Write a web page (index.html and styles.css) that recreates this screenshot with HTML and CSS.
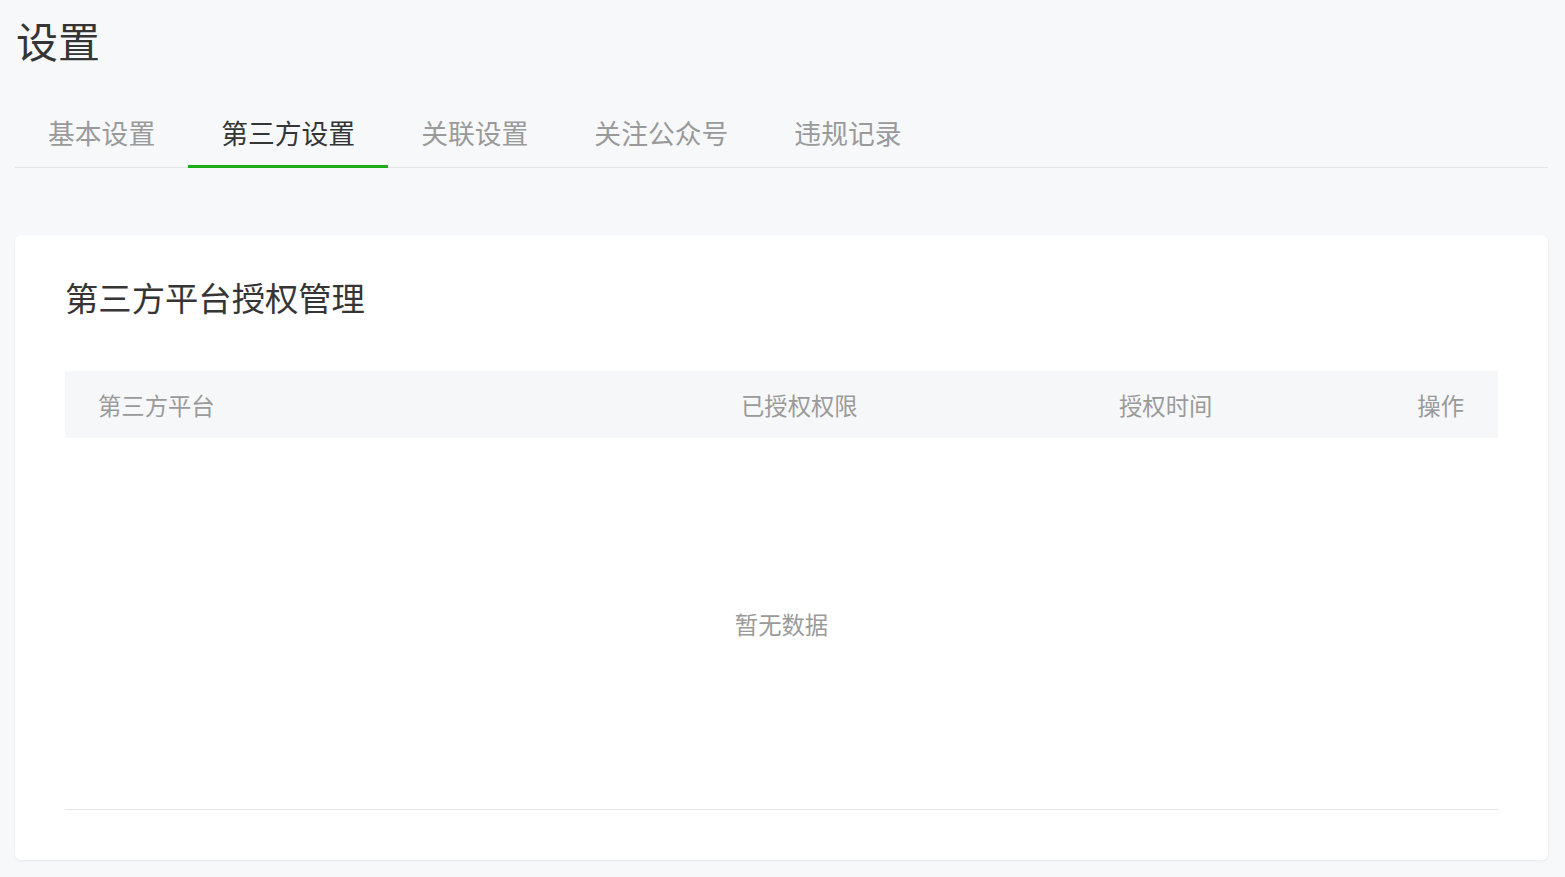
FILE: index.html
```html
<!DOCTYPE html>
<html lang="zh-CN">
<head>
    <meta charset="UTF-8">
    <meta name="viewport" content="width=device-width, initial-scale=1.0">
    <title>设置</title>
    <link rel="stylesheet" href="styles.css">
</head>
<body>
    <div class="page">
        <h1 class="page-title">设置</h1>

        <div class="tabs">
            <a class="tab">基本设置</a>
            <a class="tab active">第三方设置</a>
            <a class="tab">关联设置</a>
            <a class="tab">关注公众号</a>
            <a class="tab">违规记录</a>
        </div>

        <div class="card">
            <h2 class="card-title">第三方平台授权管理</h2>

            <div class="table">
                <div class="table-head">
                    <div class="cell">第三方平台</div>
                    <div class="cell">已授权权限</div>
                    <div class="cell">授权时间</div>
                    <div class="cell cell-right">操作</div>
                </div>
                <div class="table-empty">暂无数据</div>
            </div>
        </div>
    </div>
</body>
</html>
```

FILE: styles.css
```css
body { margin: 0; background: #f7f8fa; font-family: "Microsoft YaHei", "Noto Sans CJK SC", "Noto Sans", sans-serif; color: #353535; }
.page { padding: 11px 17px 17px 15px; }
.page-title { margin: 0; font-size: 42px; line-height: 58px; font-weight: normal; color: #353535; padding-left: 1px; }

.tabs { display: flex; margin-top: 44px; border-bottom: 1px solid #e5e5e5; }
.tab { padding: 0 33px 12px; font-size: 26.8px; line-height: 40px; color: #9a9a9a; border-bottom: 3px solid transparent; margin-bottom: -1px; cursor: pointer; }
.tab.active { color: #353535; border-bottom-color: #1aad19; }

.card { margin-top: 67px; background: #fff; border-radius: 6px; box-shadow: 0 1px 3px rgba(0, 0, 0, 0.07); padding: 40px 50px 50px; }
.card-title { margin: 0; font-size: 33.33px; line-height: 44px; font-weight: normal; color: #353535; }

.table { margin-top: 52px; border-bottom: 1px solid #e5e5e5; }
.table-head { display: grid; grid-template-columns: 643px 378px 1fr auto; height: 67px; align-items: center; background: #f6f7f9; font-size: 23.33px; color: #9a9a9a; }
.cell { padding: 0 33px; }
.cell-right { text-align: right; padding-right: 34px; }
.table-empty { height: 371px; display: flex; align-items: center; justify-content: center; font-size: 23.33px; color: #9a9a9a; }
```
